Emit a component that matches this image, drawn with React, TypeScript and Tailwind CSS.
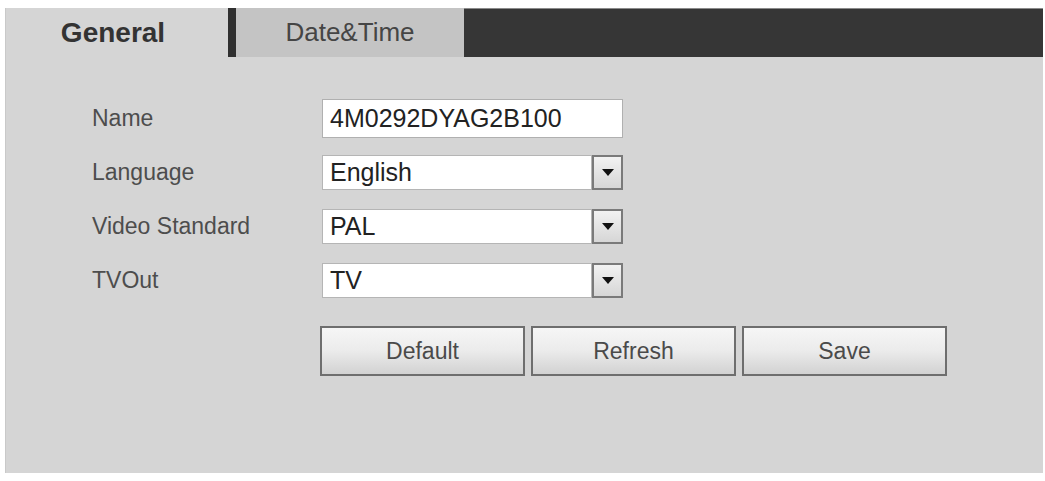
import React from "react";

const font = { fontFamily: '"Liberation Sans", Arial, sans-serif' };

function Arrow() {
  return (
    <div className="w-[31px] h-full flex items-center justify-center border-2 border-[#7a7a7a] bg-gradient-to-b from-[#f2f2f2] to-[#d6d6d6]">
      <svg width="12" height="7" viewBox="0 0 12 7">
        <path d="M0 0 L12 0 L6 7 Z" fill="#111" />
      </svg>
    </div>
  );
}

function SelectBox({ value }: { value: string }) {
  return (
    <div className="flex h-[35px] w-[301px]">
      <div className="flex-1 bg-white border border-[#b5b5b5] flex items-center pl-[7px] text-[25px] text-[#222]">
        {value}
      </div>
      <Arrow />
    </div>
  );
}

function Row({ label, children, className = "" }: { label: string; children: React.ReactNode; className?: string }) {
  return (
    <div className={"flex items-center " + className}>
      <div className="w-[230px] text-[23px] text-[#4d4d4d]">{label}</div>
      {children}
    </div>
  );
}

function Btn({ label }: { label: string }) {
  return (
    <div className="w-[205px] h-[50px] flex items-center justify-center border-2 border-[#6e6e6e] bg-gradient-to-b from-[#f6f6f6] via-[#ebebeb] to-[#d2d2d2] text-[23px] text-[#4a4a4a]">
      {label}
    </div>
  );
}

export default function App() {
  return (
    <div className="w-[1045px] h-[481px] bg-white pt-[8px] pl-[5px] pr-[2px] pb-[8px]" style={font}>
      <div className="h-full bg-[#d5d5d5] border-l border-[#c9c9c9] flex flex-col">
        <div className="flex h-[49px]">
          <div className="w-[222px] flex items-center justify-center pr-[8px] text-[28px] font-bold text-[#333]">General</div>
          <div className="w-[8px] bg-[#303030]" />
          <div className="w-[228px] flex items-center justify-center bg-[#c4c4c4] text-[26px] text-[#454545]">Date&amp;Time</div>
          <div className="flex-1 bg-[#363636] border-t border-[#8a8a8a]" />
        </div>
        <div className="pl-[86px] pt-[42px] flex flex-col">
          <Row label="Name">
            <div className="h-[39px] w-[301px] bg-white border border-[#b0b0b0] flex items-center pl-[7px] text-[25px] text-[#222]">
              4M0292DYAG2B100
            </div>
          </Row>
          <Row label="Language" className="mt-[17px]">
            <SelectBox value="English" />
          </Row>
          <Row label="Video Standard" className="mt-[19px]">
            <SelectBox value="PAL" />
          </Row>
          <Row label="TVOut" className="mt-[19px]">
            <SelectBox value="TV" />
          </Row>
          <div className="flex gap-[6px] ml-[228px] mt-[28px]">
            <Btn label="Default" />
            <Btn label="Refresh" />
            <Btn label="Save" />
          </div>
        </div>
      </div>
    </div>
  );
}
